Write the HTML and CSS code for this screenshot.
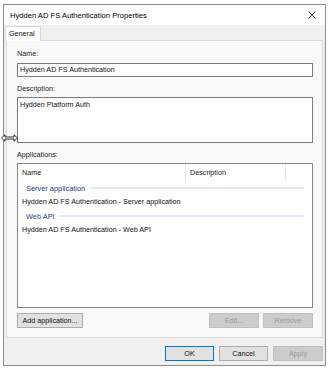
FILE: index.html
```html
<!DOCTYPE html>
<html>
<head>
<meta charset="utf-8">
<link rel="stylesheet" href="styles.css">
</head>
<body>
<div class="window">
  <div class="titlebar">
    <span class="title">Hydden AD FS Authentication Properties</span>
    <svg class="close" width="8" height="8" viewBox="0 0 8 8"><path d="M0.5 0.5 L7.5 7.5 M7.5 0.5 L0.5 7.5" stroke="#222" stroke-width="0.8" fill="none"/></svg>
  </div>
  <div class="client">
    <div class="tabs"><div class="tab">General</div></div>
    <div class="panel">
      <div class="label">Name:</div>
      <div class="input">Hydden AD FS Authentication</div>
      <div class="label gap">Description:</div>
      <div class="textarea">Hydden Platform Auth</div>
      <div class="label gap">Applications:</div>
      <div class="list">
        <div class="header">
          <div class="col c1">Name</div>
          <div class="col c2">Description</div>
          <div class="col c3"></div>
        </div>
        <div class="group"><span>Server application</span><i></i></div>
        <div class="item">Hydden AD FS Authentication - Server application</div>
        <div class="group"><span>Web API</span><i></i></div>
        <div class="item">Hydden AD FS Authentication - Web API</div>
      </div>
      <div class="btnrow">
        <div class="btn add">Add application...</div>
        <div class="spacer"></div>
        <div class="btn dis">Edit...</div>
        <div class="btn dis">Remove</div>
      </div>
    </div>
    <div class="footer">
      <div class="btn def">OK</div>
      <div class="btn">Cancel</div>
      <div class="btn dis">Apply</div>
    </div>
  </div>
</div>
<svg class="cursor" width="18" height="8" viewBox="0 0 18 8"><path d="M0.5 4 L4 0.8 L4 3 L13 3 L13 0.8 L16.5 4 L13 7.2 L13 5 L4 5 L4 7.2 Z" fill="#fff" stroke="#000" stroke-width="0.8" stroke-linejoin="round"/></svg>
</body>
</html>
```

FILE: styles.css
```css
html, body {
  margin: 0;
  padding: 0;
  background: #ffffff;
}
body {
  font-family: "Liberation Sans", Arial, sans-serif;
  font-size: 7.2px;
  color: #111;
  position: relative;
  width: 331px;
  height: 369px;
  overflow: hidden;
}
.window {
  margin: 4px 0 0 3px;
  width: 323px;
  height: 362px;
  box-sizing: border-box;
  border: 1px solid #8c8c8c;
  background: #f0f0f0;
  display: flex;
  flex-direction: column;
}
.titlebar {
  height: 20px;
  background: #ffffff;
  display: flex;
  align-items: center;
  padding: 0 6px 0 6px;
  position: relative;
}
.title {
  font-size: 7.6px;
  color: #000;
  flex: 1;
  padding-top: 1px;
}
.close {
  margin-right: 3px;
  margin-top: 0px;
}
.client {
  flex: 1;
  display: flex;
  flex-direction: column;
}
.tabs {
  height: 15px;
  margin-top: 1px;
  padding-left: 1px;
  display: flex;
  position: relative;
  z-index: 2;
}
.tab {
  width: 36px;
  box-sizing: border-box;
  height: 15px;
  background: #ffffff;
  border: 1px solid #d9d9d9;
  border-bottom: none;
  padding-left: 3px;
  line-height: 14px;
  color: #111;
}
.panel {
  margin: -1px 0 0 2px;
  width: 317px;
  height: 298px;
  box-sizing: border-box;
  border: 1px solid #d9d9d9;
  background: #f9f9f9;
  padding: 8px 9px 0 10px;
  display: flex;
  flex-direction: column;
}
.label {
  height: 10px;
  line-height: 10px;
  color: #222;
}
.label.gap {
  margin-top: 7px;
}
.input {
  margin-top: 4px;
  height: 14px;
  box-sizing: border-box;
  border: 1px solid #7a7a7a;
  background: #fff;
  padding-left: 2px;
  line-height: 12px;
  color: #111;
}
.textarea {
  margin-top: 3px;
  height: 46px;
  box-sizing: border-box;
  border: 1px solid #7a7a7a;
  background: #fff;
  padding: 1px 2px;
  line-height: 11px;
  color: #111;
}
.list {
  margin-top: 3px;
  height: 145px;
  box-sizing: border-box;
  border: 1px solid #828790;
  background: #fff;
  display: flex;
  flex-direction: column;
}
.header {
  height: 17px;
  display: flex;
}
.col {
  line-height: 17px;
  box-sizing: border-box;
  padding-left: 4px;
  color: #222;
}
.c1 { width: 168px; border-right: 1px solid #e5e5e5; }
.c2 { width: 100px; border-right: 1px solid #e5e5e5; }
.c3 { flex: 1; }
.group {
  height: 14px;
  display: flex;
  align-items: center;
  padding-left: 8px;
  padding-right: 8px;
  color: #1e3a96;
  font-size: 7.4px;
}
.group i {
  flex: 1;
  height: 2px;
  margin-left: 4px;
  background: #e4ebf5;
}
.item {
  height: 14px;
  line-height: 14px;
  padding-left: 4px;
  color: #111;
}
.btnrow {
  margin-top: 5px;
  height: 15px;
  display: flex;
  gap: 4px;
}
.spacer { flex: 1; }
.btn {
  width: 49px;
  height: 15px;
  box-sizing: border-box;
  border: 1px solid #adadad;
  background: #e1e1e1;
  text-align: center;
  line-height: 13px;
  color: #111;
}
.btn.add {
  width: 66px;
}
.btnrow .btn.dis {
  width: 50px;
}
.btn.dis {
  background: #cccccc;
  border-color: #bfbfbf;
  color: #9a9a9a;
}
.btn.def {
  border-color: #0078d7;
}
.footer {
  margin-top: 8px;
  display: flex;
  justify-content: flex-end;
  gap: 5px;
  padding-right: 2px;
}
.footer .btn.dis {
  width: 50px;
}
.cursor {
  position: absolute;
  left: 1px;
  top: 134px;
}
```
